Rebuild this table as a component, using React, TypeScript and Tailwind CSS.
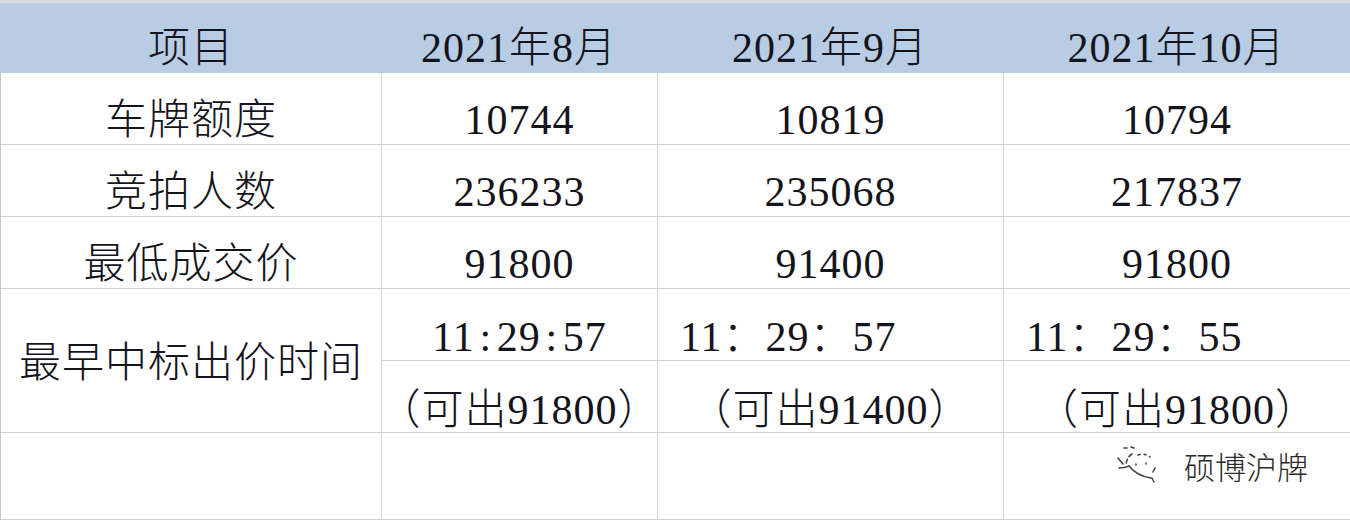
import React from 'react';

// Monthly plate auction summary table
const FONT = { fontFamily: '"Liberation Serif", "Noto Sans CJK SC", serif' };

interface CellProps {
    children?: React.ReactNode;
    className?: string;
}

const Cell: React.FC<CellProps> = ({ children, className = '' }) => (
    <div
        className={`flex items-center justify-center border-r border-b border-[#d4d4d4] text-[42px] leading-none font-light tracking-[1px] text-[#14141c] whitespace-nowrap ${className}`}
    >
        {children}
    </div>
);

const Colon: React.FC = () => <span className="inline-block w-[22px] text-center">:</span>;

const WeChatMark: React.FC = () => (
    <svg width="52" height="42" viewBox="0 0 52 42" fill="none" stroke="#444" strokeWidth="1.6" strokeLinecap="round">
        <path d="M10 4 l3 0" />
        <path d="M17 3 l3 1" />
        <path d="M4 14 l5 6" />
        <path d="M18 10 q-6 4 -6 12" strokeDasharray="4 3" />
        <path d="M5 24 q6 0 10 -2" />
        <path d="M15 22 q8 10 22 12" />
        <path d="M22 20 l0 1" />
        <path d="M32 19 l0 1" />
        <path d="M41 24 l-2 4" />
        <path d="M38 34 l2 4" />
        <path d="M24 11 q8 -2 12 2" strokeDasharray="2 4" />
    </svg>
);

export default function App() {
    const months = ['2021年8月', '2021年9月', '2021年10月'];
    const rows: { label: string; values: string[] }[] = [
        { label: '车牌额度', values: ['10744', '10819', '10794'] },
        { label: '竞拍人数', values: ['236233', '235068', '217837'] },
        { label: '最低成交价', values: ['91800', '91400', '91800'] },
    ];

    return (
        <div className="w-[1350px] h-[522px] bg-white overflow-hidden" style={FONT}>
            <div className="h-[3px] bg-[#d6d9de]" />
            <div className="grid grid-cols-[381px_276px_346px_347px] grid-rows-[70px_72px_72px_72px_72px_72px_87px] border-l border-[#c8c8c8]">
                {/* header */}
                <div className="col-span-4 grid grid-cols-[380px_276px_346px_347px] bg-[#b8cce4] text-[42px] leading-none font-light tracking-[1px] text-[#14141c]">
                    <div className="flex items-center justify-center pt-[20px]">项目</div>
                    {months.map((m) => (
                        <div key={m} className="flex items-center justify-center pt-[20px]">
                            {m}
                        </div>
                    ))}
                </div>

                {rows.map((r) => (
                    <React.Fragment key={r.label}>
                        <Cell className="pt-[22px]">{r.label}</Cell>
                        {r.values.map((v, i) => (
                            <Cell key={i} className="pt-[22px]">
                                {v}
                            </Cell>
                        ))}
                    </React.Fragment>
                ))}

                <Cell className="row-span-2 pt-[4px]">最早中标出价时间</Cell>
                <Cell className="pt-[24px]">
                    11<Colon />29<Colon />57
                </Cell>
                <Cell className="pt-[24px] justify-start pl-[22px]">11：29：57</Cell>
                <Cell className="pt-[24px] justify-start pl-[22px]">11：29：55</Cell>
                <Cell className="pt-[26px]">（可出91800）</Cell>
                <Cell className="pt-[26px]">（可出91400）</Cell>
                <Cell className="pt-[26px]">（可出91800）</Cell>

                <Cell />
                <Cell />
                <Cell />
                <Cell className="items-start justify-start pt-[11px] pl-[110px]">
                    <div className="flex items-center gap-[18px]">
                        <WeChatMark />
                        <span
                            className="text-[31px] text-[#2a2a2a] tracking-[0px]"
                            style={{ fontFamily: '"Noto Sans CJK SC", sans-serif' }}
                        >
                            硕博沪牌
                        </span>
                    </div>
                </Cell>
            </div>
        </div>
    );
}
